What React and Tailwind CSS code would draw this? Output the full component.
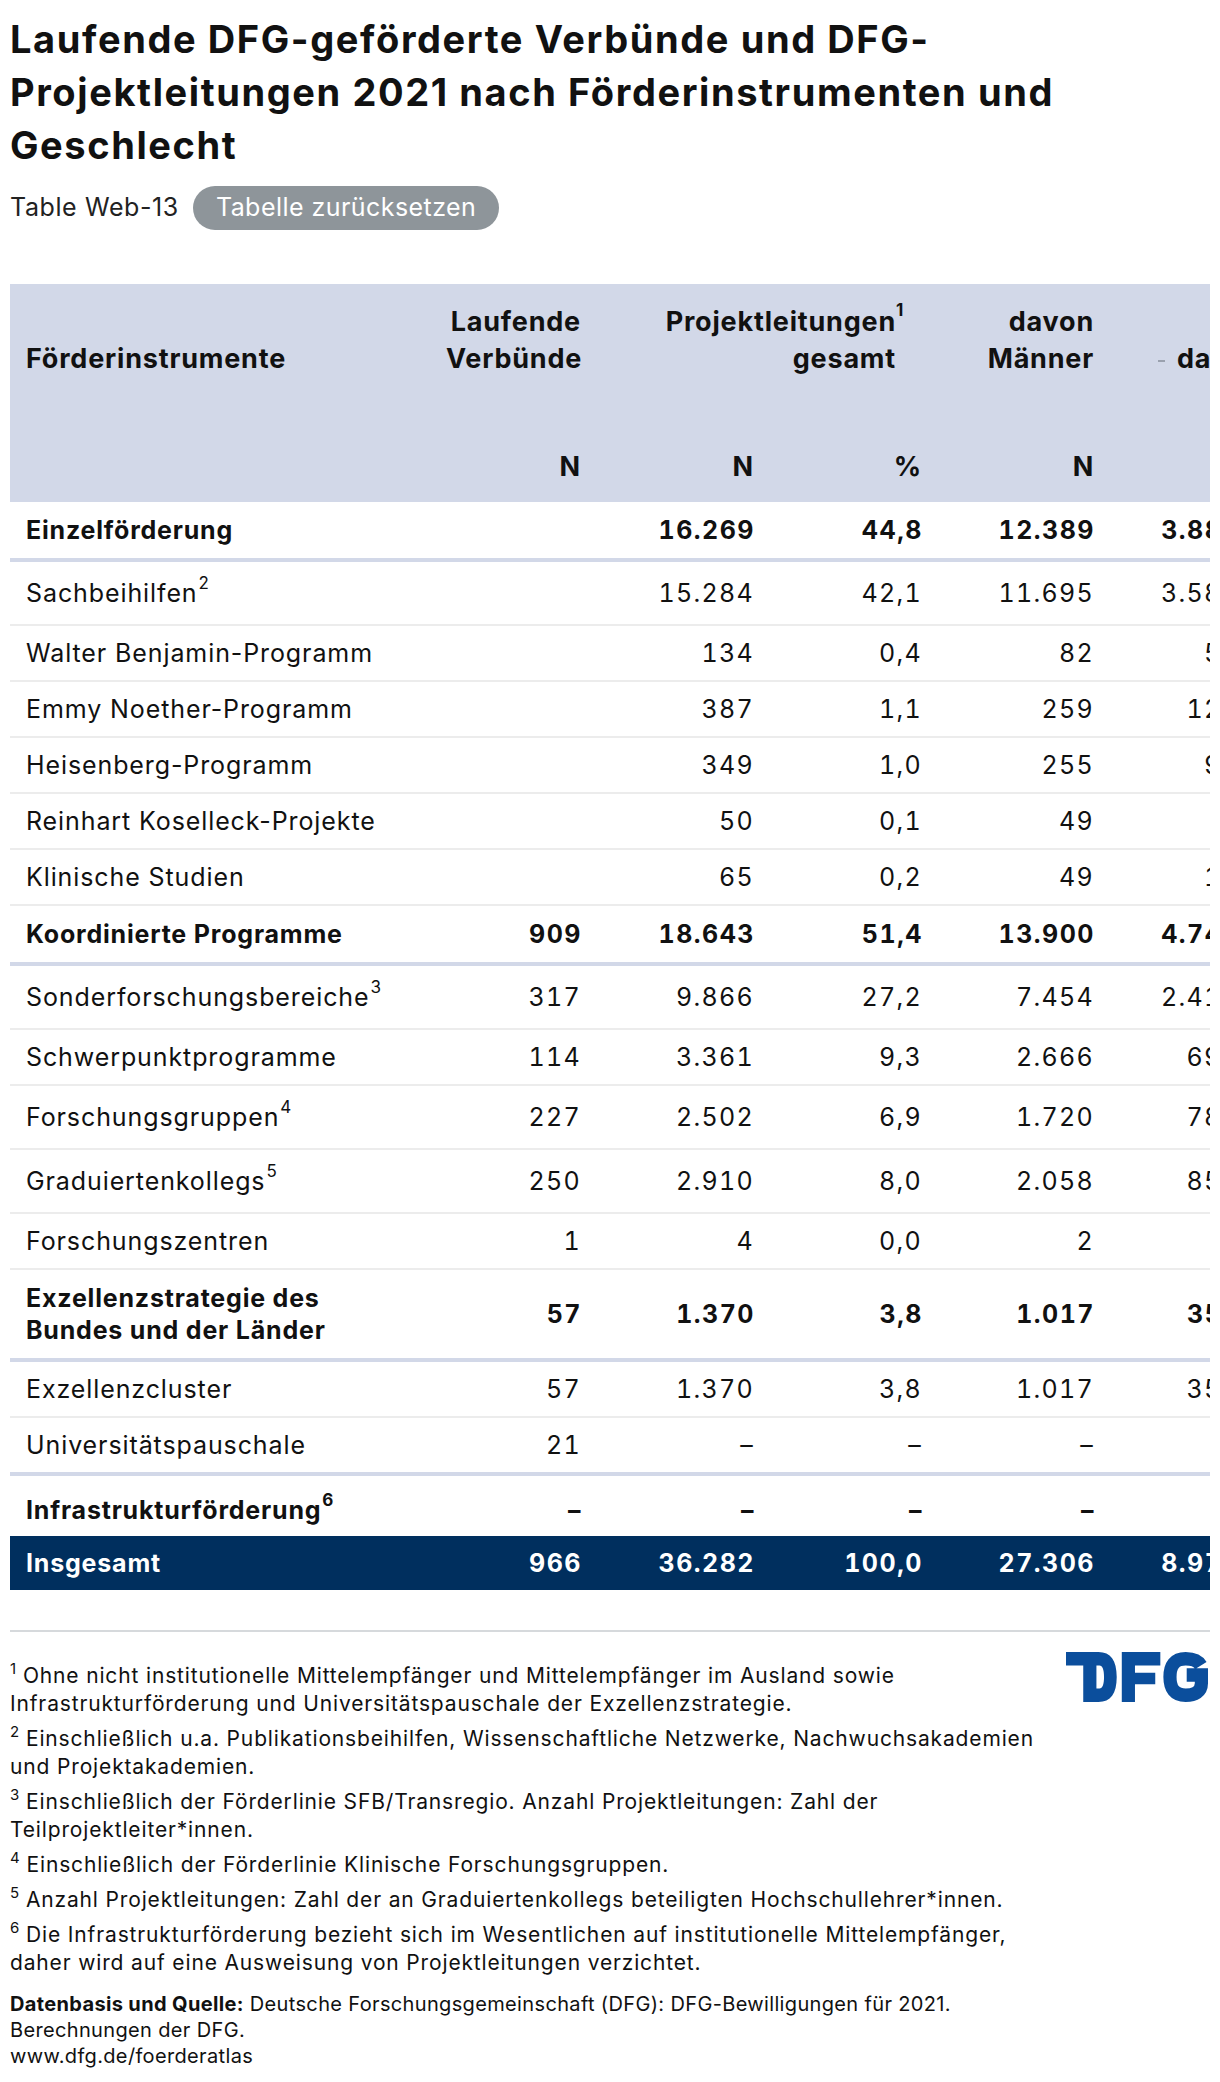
import React from "react";

const rows = [
  { label: "Einzelförderung", type: "group", v: ["", "16.269", "44,8", "12.389", "3.880"] },
  { label: "Sachbeihilfen", sup: "2", v: ["", "15.284", "42,1", "11.695", "3.589"] },
  { label: "Walter Benjamin-Programm", v: ["", "134", "0,4", "82", "52"] },
  { label: "Emmy Noether-Programm", v: ["", "387", "1,1", "259", "128"] },
  { label: "Heisenberg-Programm", v: ["", "349", "1,0", "255", "94"] },
  { label: "Reinhart Koselleck-Projekte", v: ["", "50", "0,1", "49", "1"] },
  { label: "Klinische Studien", v: ["", "65", "0,2", "49", "16"] },
  { label: "Koordinierte Programme", type: "group", v: ["909", "18.643", "51,4", "13.900", "4.743"] },
  { label: "Sonderforschungsbereiche", sup: "3", v: ["317", "9.866", "27,2", "7.454", "2.412"] },
  { label: "Schwerpunktprogramme", v: ["114", "3.361", "9,3", "2.666", "695"] },
  { label: "Forschungsgruppen", sup: "4", v: ["227", "2.502", "6,9", "1.720", "782"] },
  { label: "Graduiertenkollegs", sup: "5", v: ["250", "2.910", "8,0", "2.058", "852"] },
  { label: "Forschungszentren", v: ["1", "4", "0,0", "2", "2"] },
  { label: "Exzellenzstrategie des Bundes und der Länder", type: "group", v: ["57", "1.370", "3,8", "1.017", "353"] },
  { label: "Exzellenzcluster", v: ["57", "1.370", "3,8", "1.017", "353"] },
  { label: "Universitätspauschale", type: "last", v: ["21", "–", "–", "–", "–"] },
  { label: "Infrastrukturförderung", sup: "6", type: "infra", v: ["–", "–", "–", "–", "–"] },
  { label: "Insgesamt", type: "total", v: ["966", "36.282", "100,0", "27.306", "8.976"] },
];

const isBold = (r) => r.type === "group" || r.type === "infra" || r.type === "total";

function rowClasses(r) {
  if (r.type === "group") return "font-bold border-b-4 border-[#d2d8e8]";
  if (r.type === "last") return "border-b-4 border-[#d2d8e8]";
  if (r.type === "infra") return "font-bold";
  if (r.type === "total") return "font-bold bg-[#002f5e] text-white";
  return "border-b-2 border-[#ececec]";
}

function cellPad(r) {
  if (r.type === "infra") return "pt-[18px] pb-[10px]";
  if (r.sup) return "py-[15px]";
  if (r.type === "group") return "py-[12px]";
  return "py-[11px]";
}

function Footnote({ n, children }) {
  return (
    <p className="whitespace-nowrap leading-[28px] mb-[7px]">
      <sup className="text-[15px] top-[-0.6em] tracking-normal">{n}</sup> {children}
    </p>
  );
}

function DfgLogo() {
  return (
    <svg width="142" height="50" viewBox="0 0 140 48" preserveAspectRatio="none" className="shrink-0">
      <path
        fill="#0b4e9c"
        fillRule="evenodd"
        d="M0 0 H32 C44 0 50 8 50 24 C50 40 44 48 32 48 H17 V13 H0 Z M30 13 H33 C36 13 37.5 17 37.5 24 C37.5 31 36 35 33 35 H30 Z"
      />
      <path fill="#0b4e9c" d="M55 0 H93 V13 H68 V20 H88 V31 H68 V48 H55 Z" />
      <path
        fill="none"
        stroke="#0b4e9c"
        strokeWidth="13"
        d="M133 13 C130 8 125 6.5 118 6.5 C107 6.5 102.5 13 102.5 24 C102.5 35 107 41.5 118 41.5 C127 41.5 133.5 38 133.5 30 V22 H119"
      />
    </svg>
  );
}

export default function App() {
  return (
    <div className="w-[1220px] bg-white text-[#111] font-['Inter',sans-serif] pb-[14px]">
      <div className="pl-[10px] pt-[13px]">
        <h1 className="text-[38px] font-bold leading-[53px] tracking-[1.6px] whitespace-nowrap">
          Laufende DFG-geförderte Verbünde und DFG-
          <br />
          Projektleitungen 2021 nach Förderinstrumenten und
          <br />
          Geschlecht
        </h1>
        <div className="flex items-center gap-[14px] mt-[14px]">
          <span className="text-[25px] tracking-[0.6px] text-[#222]">Table Web-13</span>
          <button className="h-[44px] px-[23px] rounded-full bg-[#8e959a] text-white text-[25px] tracking-[0.45px]">
            Tabelle zurücksetzen
          </button>
        </div>
      </div>

      {/* Table */}
      <div className="mx-[10px] mt-[54px] overflow-hidden">
        <table className="table-fixed border-collapse w-[1300px] leading-[32px]">
          <colgroup>
            <col className="w-[436px]" />
            <col className="w-[150px]" />
            <col className="w-[173px]" />
            <col className="w-[168px]" />
            <col className="w-[172px]" />
            <col className="w-[145px]" />
            <col className="w-[56px]" />
          </colgroup>
          <thead className="bg-[#d2d8e8] font-bold text-[27px] leading-[37px] tracking-[0.8px]">
            <tr>
              <th className="text-left align-bottom pl-[16px] pt-[19px] pb-[36px]">Förderinstrumente</th>
              <th className="text-right align-bottom pr-[15px] pt-[19px] pb-[36px]">
                Laufende
                <br />
                Verbünde
              </th>
              <th colSpan={2} className="text-right align-bottom pr-[41px] pt-[19px] pb-[36px]">
                <span className="relative">
                  Projektleitungen
                  <span className="absolute left-full top-[-5px] text-[17px] leading-[20px]">1</span>
                </span>
                <br />
                gesamt
              </th>
              <th className="text-right align-bottom pr-[15px] pt-[19px] pb-[36px]">
                davon
                <br />
                Männer
              </th>
              <th className="text-left align-bottom pl-[49px] pt-[19px] pb-[36px] whitespace-nowrap">
                <span className="inline-block w-[7px] h-[2px] bg-[#9aa1ae] align-middle mr-[12px]" />
                davon Frauen
              </th>
              <th />
            </tr>
            <tr>
              <th className="pb-[17px] pt-[35px]" />
              <th className="text-right pr-[15px] pb-[17px] pt-[35px]">N</th>
              <th className="text-right pr-[15px] pb-[17px] pt-[35px]">N</th>
              <th className="text-right pr-[15px] pb-[17px] pt-[35px]">%</th>
              <th className="text-right pr-[15px] pb-[17px] pt-[35px]">N</th>
              <th className="text-right pr-[15px] pb-[17px] pt-[35px]">N</th>
              <th />
            </tr>
          </thead>
          <tbody>
            {rows.map((r) => (
              <tr key={r.label} className={rowClasses(r)}>
                <td
                  className={`text-left pl-[16px] text-[25px] ${
                    isBold(r) ? "tracking-[0.8px]" : "tracking-[0.9px]"
                  } ${cellPad(r)}`}
                >
                  {r.label === "Exzellenzstrategie des Bundes und der Länder" ? (
                    <>
                      Exzellenzstrategie des
                      <br />
                      Bundes und der Länder
                    </>
                  ) : (
                    r.label
                  )}
                  {r.sup && <sup className="text-[17px] top-[-0.75em] ml-[1px]">{r.sup}</sup>}
                </td>
                {r.v.map((val, i) => (
                  <td
                    key={i}
                    className={`text-right whitespace-nowrap tabular-nums text-[25px] ${
                      isBold(r) ? "tracking-[1.5px] pr-[14px]" : "tracking-[1.3px] pr-[15px]"
                    } ${cellPad(r)}`}
                  >
                    {val}
                  </td>
                ))}
                <td />
              </tr>
            ))}
          </tbody>
        </table>
      </div>

      {/* Footer */}
      <div className="mx-[10px] mt-[40px] border-t-2 border-[#d6d9dc]">
        <div className="flex justify-between items-start">
          <div className="pt-[30px] text-[21px] tracking-[0.85px] text-[#111]">
            <Footnote n="1">
              Ohne nicht institutionelle Mittelempfänger und Mittelempfänger im Ausland sowie
              <br />
              Infrastrukturförderung und Universitätspauschale der Exzellenzstrategie.
            </Footnote>
            <Footnote n="2">
              Einschließlich u.a. Publikationsbeihilfen, Wissenschaftliche Netzwerke, Nachwuchsakademien
              <br />
              und Projektakademien.
            </Footnote>
            <Footnote n="3">
              Einschließlich der Förderlinie SFB/Transregio. Anzahl Projektleitungen: Zahl der
              <br />
              Teilprojektleiter*innen.
            </Footnote>
            <Footnote n="4">Einschließlich der Förderlinie Klinische Forschungsgruppen.</Footnote>
            <Footnote n="5">
              Anzahl Projektleitungen: Zahl der an Graduiertenkollegs beteiligten Hochschullehrer*innen.
            </Footnote>
            <Footnote n="6">
              Die Infrastrukturförderung bezieht sich im Wesentlichen auf institutionelle Mittelempfänger,
              <br />
              daher wird auf eine Ausweisung von Projektleitungen verzichtet.
            </Footnote>
            <p className="text-[20px] tracking-[0.35px] leading-[26px] whitespace-nowrap mt-[14px]">
              <b>Datenbasis und Quelle:</b> Deutsche Forschungsgemeinschaft (DFG): DFG-Bewilligungen für 2021.
              <br />
              Berechnungen der DFG.
              <br />
              www.dfg.de/foerderatlas
            </p>
          </div>
          <div className="pt-[20px] pr-[2px]">
            <DfgLogo />
          </div>
        </div>
      </div>
    </div>
  );
}
